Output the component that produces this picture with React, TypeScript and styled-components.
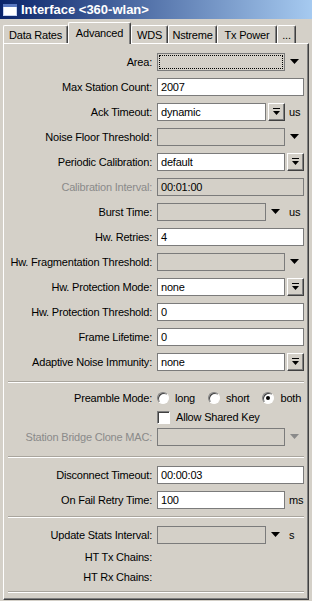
import React from 'react'
import styled, { createGlobalStyle, css } from 'styled-components'

const GlobalStyle = createGlobalStyle`
  html, body {
    margin: 0;
    padding: 0;
    background: #d4d0c8;
  }
  body {
    font-family: 'Liberation Sans', Arial, sans-serif;
    font-size: 11px;
    letter-spacing: -0.2px;
    color: #000;
  }
`

const Window = styled.div`
  width: 312px;
  height: 601px;
  background: #d4d0c8;
  display: flex;
  flex-direction: column;
  overflow: hidden;
`

const TitleBar = styled.div`
  height: 19px;
  display: flex;
  align-items: center;
  gap: 4px;
  padding-left: 3px;
  background: linear-gradient(to right, #0a246a, #a6caf0);
`

const TitleText = styled.span`
  color: #fff;
  font-weight: bold;
  font-size: 13px;
  letter-spacing: 0;
  white-space: nowrap;
`

const TabStrip = styled.div`
  height: 24px;
  display: flex;
  align-items: flex-end;
  padding-left: 3px;
`

const Tab = styled.div<{ $active?: boolean; $w: number }>`
  width: ${({ $w }) => $w}px;
  height: 18px;
  display: flex;
  align-items: center;
  justify-content: center;
  white-space: nowrap;
  background: #d4d0c8;
  border-top: 1px solid #fff;
  border-left: 1px solid #fff;
  border-right: 1px solid #404040;
  border-top-left-radius: 2px;
  border-top-right-radius: 2px;
  box-shadow: inset -1px 0 0 #808080;
  box-sizing: border-box;
  ${({ $active }) =>
    $active &&
    css`
      height: 22px;
      margin-bottom: -1px;
      padding-bottom: 2px;
      position: relative;
      z-index: 1;
    `}
`

const Panel = styled.div`
  flex: 1;
  margin: 0 3px 1px 3px;
  padding: 5px 4px 0 0;
  border-top: 1px solid #fff;
  border-left: 1px solid #fff;
  border-right: 1px solid #404040;
  border-bottom: 1px solid #404040;
  box-shadow: inset -1px -1px 0 #808080;
  display: flex;
  flex-direction: column;
`

const Row = styled.div<{ $h?: number }>`
  height: ${({ $h }) => $h ?? 25}px;
  display: grid;
  grid-template-columns: 148px 1fr;
  column-gap: 5px;
  align-items: center;
`

const Label = styled.div<{ $disabled?: boolean }>`
  text-align: right;
  white-space: nowrap;
  color: ${({ $disabled }) => ($disabled ? '#8a8a8a' : '#000')};
`

const Field = styled.div`
  display: flex;
  align-items: center;
  height: 18px;
`

const Box = styled.div<{ $white?: boolean; $focus?: boolean }>`
  flex: 1;
  height: 18px;
  box-sizing: border-box;
  border: 1px solid #7b7b7b;
  background: ${({ $white }) => ($white ? '#fff' : '#d4d0c8')};
  padding-left: 3px;
  display: flex;
  align-items: center;
  white-space: nowrap;
  position: relative;
  ${({ $focus }) =>
    $focus &&
    css`
      &::after {
        content: '';
        position: absolute;
        inset: 1px;
        border: 1px dotted #000;
      }
    `}
`

const Slot = styled.div`
  width: 19px;
  height: 18px;
  display: flex;
  align-items: center;
  justify-content: center;
  flex-shrink: 0;
`

const DropButton = styled.div`
  width: 17px;
  height: 18px;
  margin-left: 2px;
  box-sizing: border-box;
  background: #d4d0c8;
  border-top: 1px solid #fff;
  border-left: 1px solid #fff;
  border-right: 1px solid #404040;
  border-bottom: 1px solid #404040;
  box-shadow: inset -1px -1px 0 #808080;
  display: flex;
  align-items: center;
  justify-content: center;
`

const Unit = styled.div`
  width: 19px;
  padding-left: 4px;
  box-sizing: border-box;
  flex-shrink: 0;
  white-space: nowrap;
`

const Separator = styled.div<{ $top: number; $bottom: number }>`
  margin: ${({ $top, $bottom }) => `${$top}px 0 ${$bottom}px 4px`};
  border-top: 1px solid #a9a59d;
  border-bottom: 1px solid #fff;
`

const Options = styled.div`
  display: flex;
  align-items: center;
  gap: 13px;
`

const Option = styled.label`
  display: flex;
  align-items: center;
  gap: 6px;
  white-space: nowrap;
`

const Radio = styled.span<{ $checked?: boolean }>`
  width: 12px;
  height: 12px;
  box-sizing: border-box;
  border-radius: 50%;
  background: #fff;
  border: 1px solid;
  border-color: #808080 #fff #fff #808080;
  box-shadow: inset 1px 1px 0 #404040;
  display: flex;
  align-items: center;
  justify-content: center;
  &::after {
    content: '';
    width: 4px;
    height: 4px;
    border-radius: 50%;
    background: ${({ $checked }) => ($checked ? '#000' : 'transparent')};
  }
`

const Checkbox = styled.span`
  width: 13px;
  height: 13px;
  box-sizing: border-box;
  background: #fff;
  border: 1px solid;
  border-color: #808080 #fff #fff #808080;
  box-shadow: inset 1px 1px 0 #404040;
`

const Arrow = ({ color = '#000' }: { color?: string }) => (
  <svg width="9" height="5" viewBox="0 0 9 5">
    <polygon points="0,0 9,0 4.5,5" fill={color} />
  </svg>
)

const BarArrow = () => (
  <svg width="7" height="8" viewBox="0 0 7 8">
    <rect x="0" y="0" width="7" height="1" fill="#000" />
    <polygon points="0,3 7,3 3.5,7" fill="#000" />
  </svg>
)

const WindowIcon = () => (
  <svg width="14" height="12" viewBox="0 0 14 12">
    <rect x="0.5" y="0.5" width="13" height="11" fill="#fff" stroke="#c8d4f0" />
    <rect x="0" y="0" width="14" height="3" fill="#5a78c0" />
  </svg>
)

type Spec = {
  label: string
  value?: string
  white?: boolean
  focus?: boolean
  control?: 'arrow' | 'button'
  unit?: string
  disabled?: boolean
}

const upper: Spec[] = [
  { label: 'Area', focus: true, control: 'arrow' },
  { label: 'Max Station Count', white: true, value: '2007' },
  { label: 'Ack Timeout', white: true, value: 'dynamic', control: 'button', unit: 'us' },
  { label: 'Noise Floor Threshold', control: 'arrow' },
  { label: 'Periodic Calibration', white: true, value: 'default', control: 'button' },
  { label: 'Calibration Interval', value: '00:01:00', disabled: true },
  { label: 'Burst Time', control: 'arrow', unit: 'us' },
  { label: 'Hw. Retries', white: true, value: '4' },
  { label: 'Hw. Fragmentation Threshold', control: 'arrow' },
  { label: 'Hw. Protection Mode', white: true, value: 'none', control: 'button' },
  { label: 'Hw. Protection Threshold', white: true, value: '0' },
  { label: 'Frame Lifetime', white: true, value: '0' },
  { label: 'Adaptive Noise Immunity', white: true, value: 'none', control: 'button' },
]

const FieldRow = ({ spec }: { spec: Spec }) => (
  <Row>
    <Label $disabled={spec.disabled}>{spec.label}:</Label>
    <Field>
      <Box $white={spec.white} $focus={spec.focus}>
        {spec.value}
      </Box>
      {spec.control === 'arrow' && (
        <Slot>
          <Arrow color={spec.disabled ? '#8a8a8a' : '#000'} />
        </Slot>
      )}
      {spec.control === 'button' && (
        <DropButton>
          <BarArrow />
        </DropButton>
      )}
      {spec.unit && <Unit>{spec.unit}</Unit>}
    </Field>
  </Row>
)

const tabs: [string, number][] = [
  ['Data Rates', 65],
  ['Advanced', 63],
  ['WDS', 37],
  ['Nstreme', 49],
  ['Tx Power', 60],
  ['...', 19],
]

export default function App() {
  return (
    <>
      <GlobalStyle />
      <Window>
        <TitleBar>
          <WindowIcon />
          <TitleText>Interface &lt;360-wlan&gt;</TitleText>
        </TitleBar>
        <TabStrip>
          {tabs.map(([t, w]) => (
            <Tab key={t} $w={w} $active={t === 'Advanced'}>
              {t}
            </Tab>
          ))}
        </TabStrip>
        <Panel>
          {upper.map((s) => (
            <FieldRow key={s.label} spec={s} />
          ))}
          <Separator $top={7} $bottom={3} />
          <Row $h={24}>
            <Label>Preamble Mode:</Label>
            <Options>
              <Option>
                <Radio />
                long
              </Option>
              <Option>
                <Radio />
                short
              </Option>
              <Option>
                <Radio $checked />
                both
              </Option>
            </Options>
          </Row>
          <Row $h={14}>
            <span />
            <Option>
              <Checkbox />
              Allow Shared Key
            </Option>
          </Row>
          <Row>
            <Label $disabled>Station Bridge Clone MAC:</Label>
            <Field>
              <Box />
              <Slot>
                <Arrow color="#8a8a8a" />
              </Slot>
            </Field>
          </Row>
          <Separator $top={7} $bottom={4} />
          <FieldRow spec={{ label: 'Disconnect Timeout', white: true, value: '00:00:03' }} />
          <FieldRow spec={{ label: 'On Fail Retry Time', white: true, value: '100', unit: 'ms' }} />
          <Separator $top={4} $bottom={4} />
          <FieldRow spec={{ label: 'Update Stats Interval', control: 'arrow', unit: 's' }} />
          <Row $h={20}>
            <Label>HT Tx Chains:</Label>
          </Row>
          <Row $h={20}>
            <Label>HT Rx Chains:</Label>
          </Row>
          <Separator $top={4} $bottom={0} />
        </Panel>
      </Window>
    </>
  )
}
